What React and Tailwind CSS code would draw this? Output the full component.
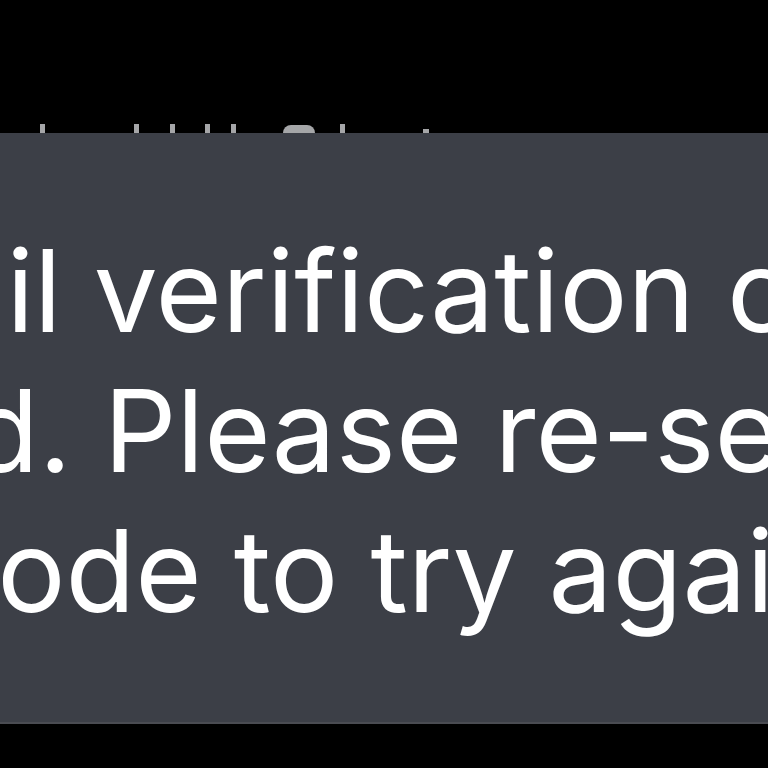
export default function App() {
  return (
    <div className="h-[768px] w-[768px] overflow-hidden bg-black font-['Inter','Noto_Sans',sans-serif]">
      {/* cut-off text peeking above the toast */}
      <div className="flex h-[133px] items-end">
        <div className="flex h-[10px] items-end opacity-80">
          <span className="ml-[40px] h-[9px] w-[5px] bg-[#cfd0d3]" />
          <span className="ml-[89px] h-[9px] w-[5px] bg-[#cfd0d3]" />
          <span className="ml-[31px] h-[9px] w-[5px] bg-[#cfd0d3]" />
          <span className="ml-[30px] h-[9px] w-[5px] bg-[#cfd0d3]" />
          <span className="ml-[21px] h-[9px] w-[5px] bg-[#cfd0d3]" />
          <span className="ml-[47px] h-[8px] w-[32px] rounded-t-full bg-[#cfd0d3]" />
          <span className="ml-[25px] h-[9px] w-[5px] bg-[#cfd0d3]" />
          <span className="ml-[78px] h-[4px] w-[6px] bg-[#cfd0d3]" />
        </div>
      </div>

      {/* toast */}
      <div className="h-[591px] border-b-2 border-[#4a4c52] bg-[#3c3f47] pt-[88px] text-[114px] leading-[140px] text-white">
        <div className="ml-[-226px] whitespace-nowrap">Email verification code</div>
        <div className="ml-[-362px] whitespace-nowrap">expired. Please re-send the</div>
        <div className="ml-[-68px] whitespace-nowrap">code to try again.</div>
      </div>
    </div>
  )
}
